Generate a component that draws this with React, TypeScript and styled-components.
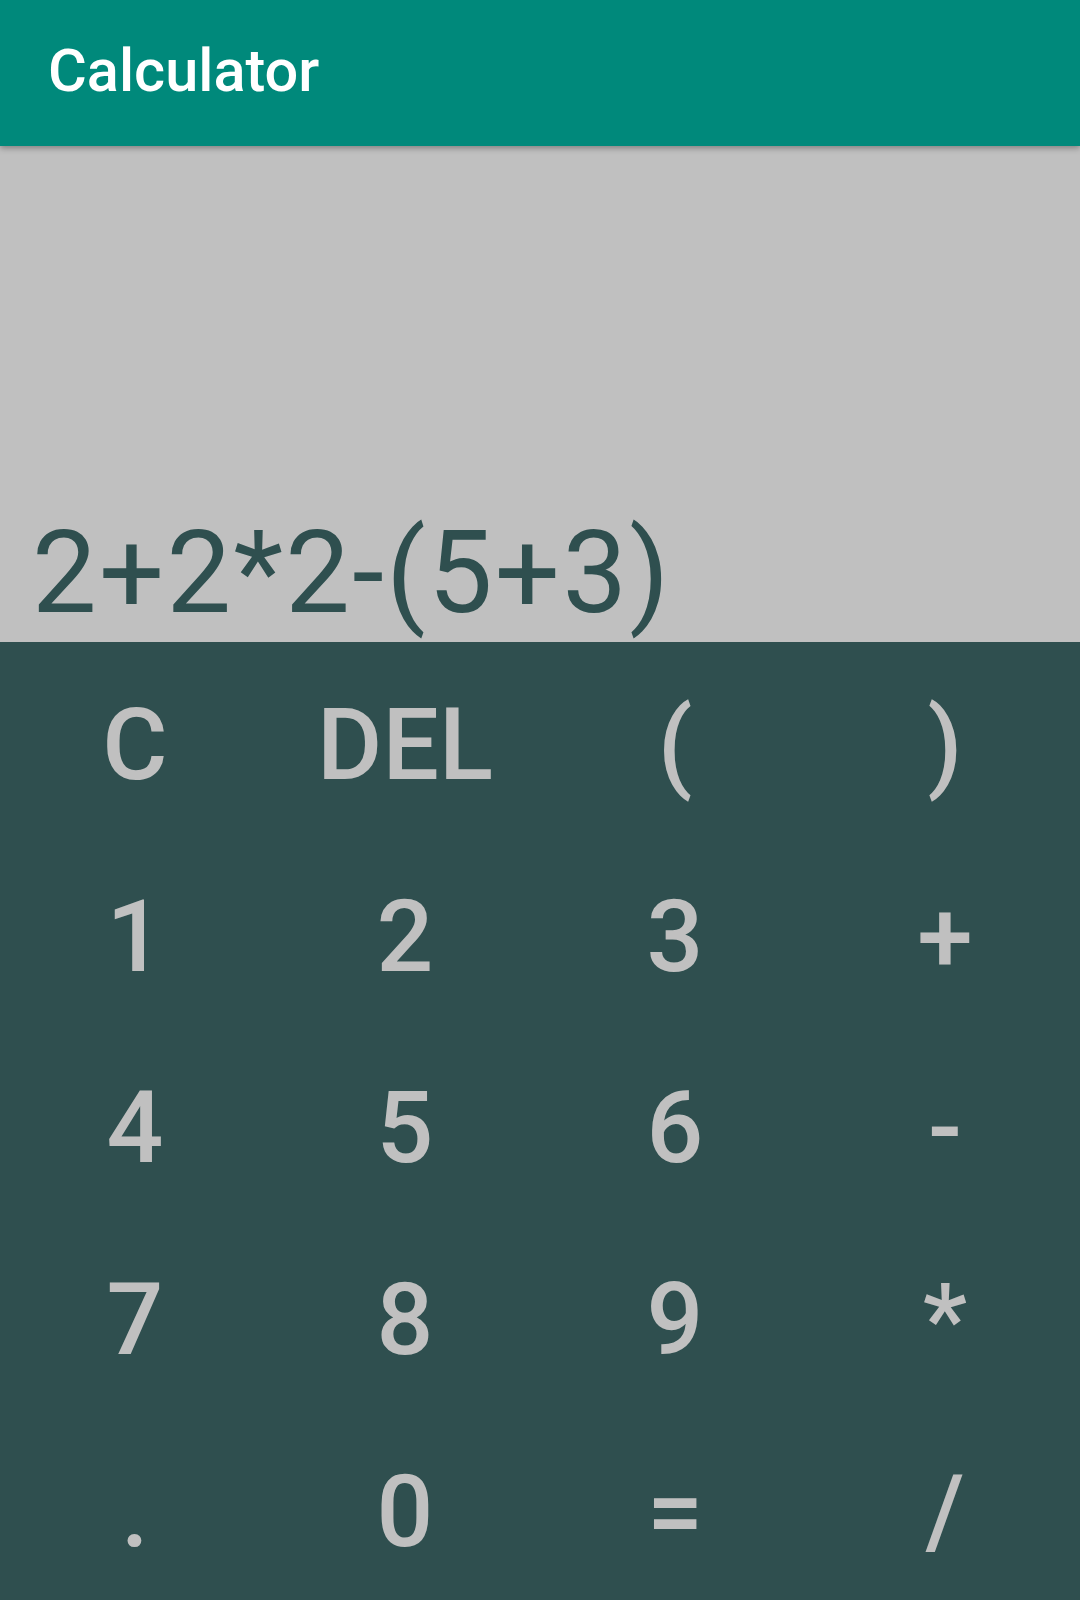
import React from "react";
import styled, { createGlobalStyle } from "styled-components";

const GlobalStyle = createGlobalStyle`
  html, body {
    margin: 0;
    padding: 0;
    background: #2f4f4f;
  }
  #root {
    height: 1600px;
  }
`;

const Screen = styled.div`
  display: flex;
  flex-direction: column;
  width: 1080px;
  height: 1600px;
  font-family: Roboto, "Liberation Sans", sans-serif;
`;

const AppBar = styled.header`
  position: relative;
  z-index: 2;
  flex: 0 0 146px;
  box-sizing: border-box;
  display: flex;
  align-items: center;
  padding: 0 0 4px 48px;
  background: #00897b;
  box-shadow: 0 2px 6px rgba(0, 0, 0, 0.35);
`;

const Title = styled.h1`
  margin: 0;
  color: #ffffff;
  font-size: 59.5px;
  font-weight: 500;
  line-height: normal;
`;

const Display = styled.section`
  flex: 0 0 496px;
  display: flex;
  flex-direction: column;
  justify-content: flex-end;
  padding-left: 32px;
  background: #c0c0c0;
`;

const Expression = styled.div`
  color: #2f4f4f;
  font-size: 115px;
  font-weight: 400;
  letter-spacing: 2.3px;
  line-height: normal;
  margin-bottom: 2px;
  white-space: nowrap;
`;

const Keypad = styled.section`
  flex: 1 1 auto;
  display: grid;
  grid-template-columns: repeat(4, 1fr);
  grid-template-rows: repeat(5, 1fr);
  background: #2f4f4f;
`;

const Key = styled.button`
  display: flex;
  align-items: center;
  justify-content: center;
  padding: 14px 0 0;
  border: none;
  background: transparent;
  color: #c0c0c0;
  font-family: Roboto, "Liberation Sans", sans-serif;
  font-size: 100px;
  font-weight: 500;
  line-height: normal;
  cursor: pointer;
`;

const keys = [
  "C", "DEL", "(", ")",
  "1", "2", "3", "+",
  "4", "5", "6", "-",
  "7", "8", "9", "*",
  ".", "0", "=", "/",
];

export default function App() {
  return (
    <>
      <GlobalStyle />
      <Screen>
        <AppBar>
          <Title>Calculator</Title>
        </AppBar>
        <Display>
          <Expression>2+2*2-(5+3)</Expression>
        </Display>
        <Keypad>
          {keys.map((k) => (
            <Key key={k}>{k}</Key>
          ))}
        </Keypad>
      </Screen>
    </>
  );
}
